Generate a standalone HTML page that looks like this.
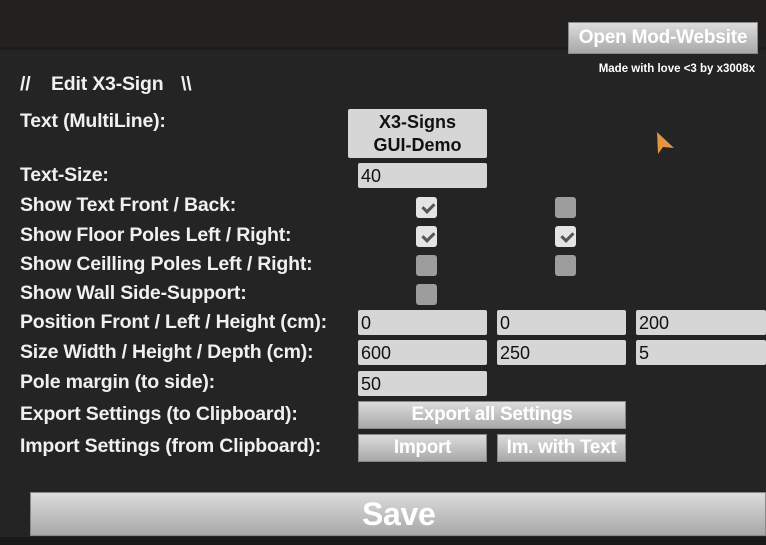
<!DOCTYPE html>
<html><head><style>
body{margin:0;width:766px;height:545px;overflow:hidden;background:#242424;font-family:"Liberation Sans",sans-serif;position:relative}
.a{position:absolute}
.l{position:absolute;left:20px;color:#f0f0f0;font-weight:bold;font-size:19.5px;line-height:20px;white-space:nowrap;letter-spacing:-0.2px}
.in{position:absolute;background:#d6d6d6;border-radius:2px;height:25px;width:129px;color:#111;font-size:18px;line-height:26px;box-sizing:border-box;padding-left:3px}
.btn{position:absolute;background:linear-gradient(#dcdcdc,#a8a8a8);border:1px solid #888;box-sizing:border-box;color:#fff;font-weight:bold;text-align:center;font-size:19px;letter-spacing:-0.3px}
.cb{position:absolute;width:21px;height:21px;border-radius:3px;background:#9d9d9d}
.cb.c{background:#e4e4e4}
.cb.c::after{content:"";position:absolute;left:5px;top:3px;width:9px;height:5px;border-left:3px solid #555;border-bottom:3px solid #555;transform:rotate(-45deg) translate(-1px,3px)}
</style></head><body>
<div class="a" style="left:0;top:0;width:766px;height:47px;background:#222120"></div>
<div class="a" style="left:0;top:47px;width:766px;height:3px;background:#1d1c1b"></div>
<div class="btn" style="left:568px;top:22px;width:190px;height:32px;font-size:19px;line-height:30px;letter-spacing:-0.2px">Open Mod-Website</div>
<div class="a" style="right:11px;top:63px;color:#fff;font-weight:bold;font-size:11.5px">Made with love &lt;3 by x3008x</div>
<svg class="a" style="left:655px;top:130px" width="22" height="26"><path d="M2 2 L19 18 L8 17 L3 24 Z" fill="#e3953f"/></svg>
<div class="l" style="top:74px">//</div>
<div class="l" style="top:74px;left:51px">Edit X3-Sign</div>
<div class="l" style="top:74px;left:181px">\\</div>
<div class="l" style="top:111px">Text (MultiLine):</div>
<div class="l" style="top:165px">Text-Size:</div>
<div class="l" style="top:195px">Show Text Front / Back:</div>
<div class="l" style="top:225px">Show Floor Poles Left / Right:</div>
<div class="l" style="top:254px">Show Ceilling Poles Left / Right:</div>
<div class="l" style="top:283px">Show Wall Side-Support:</div>
<div class="l" style="top:312px">Position Front / Left / Height (cm):</div>
<div class="l" style="top:342px">Size Width / Height / Depth (cm):</div>
<div class="l" style="top:372px">Pole margin (to side):</div>
<div class="l" style="top:404px">Export Settings (to Clipboard):</div>
<div class="l" style="top:436px">Import Settings (from Clipboard):</div>
<div class="a" style="left:348px;top:109px;width:139px;height:49px;background:#d6d6d6;border-radius:2px;color:#111;font-weight:bold;font-size:18px;line-height:23px;text-align:center;padding-top:2px;box-sizing:border-box">X3-Signs<br>GUI-Demo</div>
<div class="in" style="left:358px;top:163px">40</div>
<div class="cb c" style="left:416px;top:197px"></div><div class="cb" style="left:555px;top:197px"></div>
<div class="cb c" style="left:416px;top:226px"></div><div class="cb c" style="left:555px;top:226px"></div>
<div class="cb" style="left:416px;top:255px"></div><div class="cb" style="left:555px;top:255px"></div>
<div class="cb" style="left:416px;top:284px"></div>
<div class="in" style="left:358px;top:310px">0</div><div class="in" style="left:497px;top:310px">0</div><div class="in" style="left:636px;top:310px;width:130px">200</div>
<div class="in" style="left:358px;top:340px">600</div><div class="in" style="left:497px;top:340px">250</div><div class="in" style="left:636px;top:340px;width:130px">5</div>
<div class="in" style="left:358px;top:371px">50</div>
<div class="btn" style="left:358px;top:401px;width:268px;height:28px;line-height:26px">Export all Settings</div>
<div class="btn" style="left:358px;top:434px;width:129px;height:28px;line-height:26px">Import</div>
<div class="btn" style="left:497px;top:434px;width:129px;height:28px;line-height:26px">Im. with Text</div>
<div class="btn" style="left:30px;top:492px;width:736px;height:44px;line-height:42px;font-size:32px;text-align:left;padding-left:331px">Save</div>
<div class="a" style="left:0;top:537px;width:766px;height:8px;background:#181818"></div>
</body></html>
